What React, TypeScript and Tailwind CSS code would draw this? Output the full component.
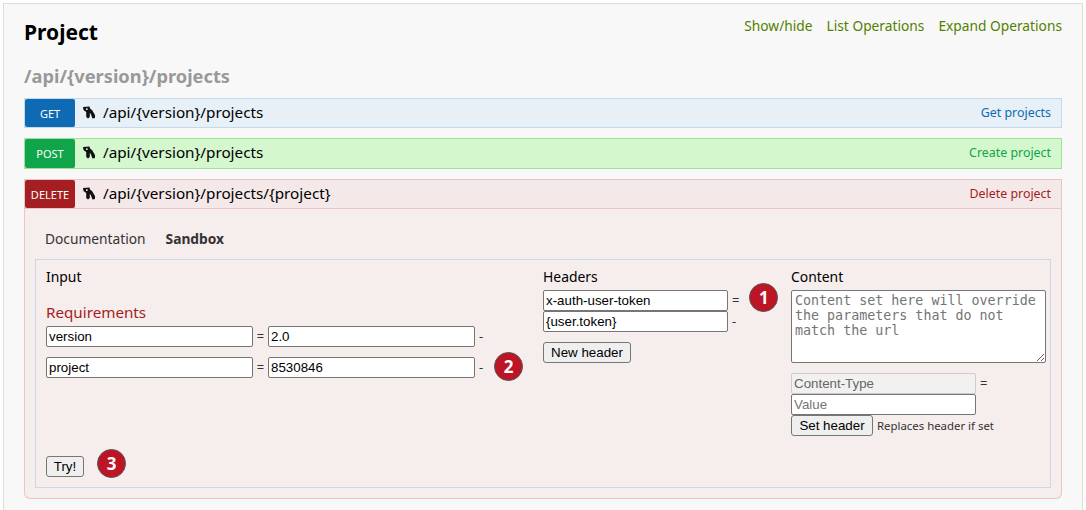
import React from "react";

const sans = "font-['Noto_Sans',sans-serif]";
const inputFont = "h-[21px] rounded-[2px] border px-[2px] font-['Liberation_Sans',sans-serif] text-[13.33px] outline-none";
const inputBase = `${inputFont} border-[#767676] bg-white text-black placeholder:text-[#757575]`;
const buttonBase =
  "h-[21px] rounded-[3px] border border-[#767676] bg-[#efefef] font-['Liberation_Sans',sans-serif] text-[13.33px] text-black";

function Wrench() {
  return (
    <svg width="12" height="13" viewBox="0 0 12 13" className="block shrink-0">
      <path
        d="M0 1 L6.5 0.5 L7 2.5 L9 4 L12 9 L12 12 L9.5 12.5 L7.5 7.5 L6.8 7 L6.8 11 L5 12.5 L3.2 11 L3.2 6 L0.5 4 Z"
        fill="#111"
      />
      <path d="M3 2.2 L4.6 2.2 L4.6 4 L3 4 Z" fill="#ddd" />
    </svg>
  );
}

function Row({
  method,
  path,
  summary,
  rowClass,
  badgeClass,
  summaryClass,
  height,
}: {
  method: string;
  path: string;
  summary: string;
  rowClass: string;
  badgeClass: string;
  summaryClass: string;
  height: string;
}) {
  return (
    <div className={`flex items-center border ${height} ${rowClass}`}>
      <div
        className={`flex h-full w-[50px] shrink-0 items-center justify-center rounded-[2px] pt-[2px] text-[11px] text-white ${badgeClass}`}
      >
        {method}
      </div>
      <div className="ml-[8px] pb-[2px]">
        <Wrench />
      </div>
      <div className="ml-[8px] pb-[2px] text-[15.25px] text-black">{path}</div>
      <div className={`ml-auto pr-[10px] text-[12.4px] ${summaryClass}`}>{summary}</div>
    </div>
  );
}

function Badge({ n, className }: { n: number; className: string }) {
  return (
    <div
      className={`flex h-[29px] w-[29px] shrink-0 items-center justify-center self-start rounded-full border border-[#555] bg-[#bd1426] text-[17px] font-bold text-white ${className}`}
    >
      {n}
    </div>
  );
}

function ParamRow({ name, value, badge }: { name: string; value: string; badge?: React.ReactNode }) {
  return (
    <div className="flex h-[21px] items-center">
      <input readOnly value={name} className={`${inputBase} w-[207px]`} />
      <span className="w-[15px] text-center text-[13px] text-[#333]">=</span>
      <input readOnly value={value} className={`${inputBase} w-[207px]`} />
      <span className="ml-[4px] text-[13px] text-[#333]">-</span>
      {badge}
    </div>
  );
}

export default function App() {
  return (
    <div className={`h-[510px] overflow-hidden bg-white pl-[3px] pr-[3px] pt-[3px] ${sans}`}>
      <div className="h-[520px] border border-[#dddddd] bg-[#f8f8f8] pl-[20px] pr-[20px]">
        <div className="flex items-start justify-between pt-[12px]">
          <h2 className="text-[21px] font-bold leading-[32px] text-black">Project</h2>
          <div className="flex gap-[14px] text-[13.75px] leading-[20px] text-[#547f00]">
            <span>Show/hide</span>
            <span>List Operations</span>
            <span>Expand Operations</span>
          </div>
        </div>
        <h3 className="mt-[15px] text-[18.25px] font-bold leading-[26px] text-[#999999]">
          /api/{"{version}"}/projects
        </h3>
        <div className="mt-[9px] flex flex-col gap-[10px]">
          <Row
            method="GET"
            path="/api/{version}/projects"
            summary="Get projects"
            height="h-[30px]"
            rowClass="border-[#c3d9ec] bg-[#e7f0f7]"
            badgeClass="bg-[#0f6ab4]"
            summaryClass="text-[#0f6ab4]"
          />
          <Row
            method="POST"
            path="/api/{version}/projects"
            summary="Create project"
            height="h-[31px]"
            rowClass="border-[#a3e09a] bg-[#d4f7cd]"
            badgeClass="bg-[#10a54a]"
            summaryClass="text-[#10a54a]"
          />
          <div>
            <Row
              method="DELETE"
              path="/api/{version}/projects/{project}"
              summary="Delete project"
              height="h-[30px]"
              rowClass="border-[#e8c6c7] bg-[#f5e8e8]"
              badgeClass="bg-[#a41e22]"
              summaryClass="text-[#a41e22]"
            />
            <div className="h-[290px] rounded-b-[6px] border border-t-0 border-[#e8c6c7] bg-[#f6eded] px-[10px]">
              <div className="flex gap-[20px] pl-[10px] pt-[20px] text-[13.75px] leading-[20px] text-[#333]">
                <span>Documentation</span>
                <span className="font-bold">Sandbox</span>
              </div>
              <div className="mt-[10px] grid h-[229px] grid-cols-[497px_248px_1fr] border border-[#c8d8e8] px-[10px] pt-[7px]">
                <div className="flex flex-col">
                  <div className="text-[13.9px] leading-[20px] text-black">Input</div>
                  <div className="mt-[14px] text-[15.2px] leading-[22px] text-[#a41e22]">Requirements</div>
                  <div className="mt-[3px] flex flex-col gap-[10px]">
                    <ParamRow name="version" value="2.0" />
                    <ParamRow name="project" value="8530846" badge={<Badge n={2} className="ml-[11px] -mt-[5px]" />} />
                  </div>
                  <div className="mt-auto mb-[10px] flex h-[21px] items-center gap-[13px]">
                    <button className={`${buttonBase} w-[38px]`}>Try!</button>
                    <Badge n={3} className="-mt-[7px]" />
                  </div>
                </div>
                <div>
                  <div className="text-[13.9px] leading-[20px] text-black">Headers</div>
                  <div className="mt-[3px] flex h-[21px] items-center">
                    <input readOnly value="x-auth-user-token" className={`${inputBase} w-[185px]`} />
                    <span className="ml-[4px] text-[13px] text-[#333]">=</span>
                    <Badge n={1} className="ml-[10px] -mt-[7px]" />
                  </div>
                  <div className="flex h-[21px] items-center">
                    <input readOnly value="{user.token}" className={`${inputBase} w-[185px]`} />
                    <span className="ml-[4px] text-[13px] text-[#333]">-</span>
                  </div>
                  <button className={`${buttonBase} mt-[10px] w-[88px]`}>New header</button>
                </div>
                <div>
                  <div className="text-[13.9px] leading-[20px] text-black">Content</div>
                  <textarea
                    readOnly
                    placeholder="Content set here will override the parameters that do not match the url"
                    className="mt-[3px] block h-[73px] w-[255px] rounded-[2px] border border-[#767676] bg-white px-[3px] py-[2px] font-['DejaVu_Sans_Mono',monospace] text-[13.33px] leading-[15px] outline-none placeholder:text-[#757575]"
                  />
                  <div className="mt-[10px] flex items-center">
                    <input
                      disabled
                      value="Content-Type"
                      className={`${inputFont} w-[185px] border-[#cccccc] bg-[#f3f1f0] text-[#666]`}
                    />
                    <span className="ml-[4px] text-[13px] text-[#333]">=</span>
                  </div>
                  <input readOnly placeholder="Value" className={`${inputBase} block w-[185px]`} />
                  <div className="flex items-center">
                    <button className={`${buttonBase} w-[82px]`}>Set header</button>
                    <span className="ml-[4px] text-[11.4px] text-[#333]">Replaces header if set</span>
                  </div>
                </div>
              </div>
            </div>
          </div>
        </div>
      </div>
    </div>
  );
}
